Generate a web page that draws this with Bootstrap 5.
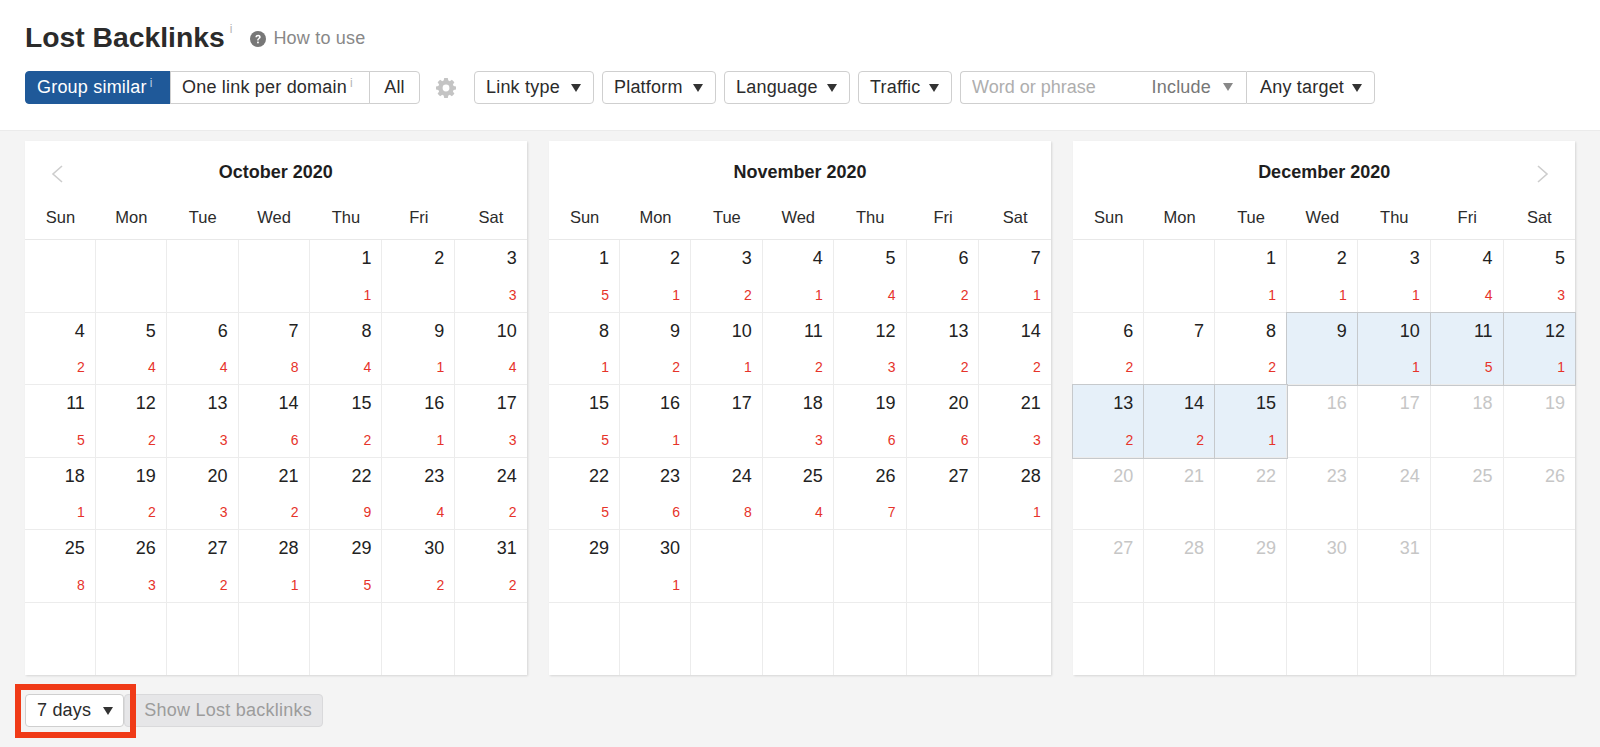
<!DOCTYPE html>
<html lang="en">
<head>
<meta charset="utf-8">
<title>Lost Backlinks</title>
<link href="https://cdn.jsdelivr.net/npm/bootstrap@5.3.0/dist/css/bootstrap.min.css" rel="stylesheet">
<style>
html,body{height:747px;overflow:hidden}
body{background:#f4f4f4;font-family:"Liberation Sans",Arial,sans-serif;color:#222;font-size:18px}
.head-area{background:#fff;height:131px;border-bottom:1px solid #ebebeb;padding:20px 25px 0}
.page-title{font-size:28.3px;font-weight:700;line-height:34px;margin:0;color:#2b2b2b}
.tip{font-size:12px;color:#b5b5b5;font-weight:400;line-height:1;align-self:flex-start;margin-left:5px;margin-top:3px}
.tip-w{color:#b9cde3}
.how{color:#888;font-size:18px;margin-left:18px;margin-top:3px;letter-spacing:.2px}
.how svg{margin-right:7px}
.tools{margin-top:17px;height:33px}
.ah{--bs-btn-font-size:18px;--bs-btn-padding-x:11px;--bs-btn-padding-y:0;--bs-btn-border-color:#cfcfcf;--bs-btn-color:#2b2b2b;--bs-btn-bg:#fff;--bs-btn-border-radius:4px;--bs-btn-line-height:31px;--bs-btn-hover-bg:#fff;--bs-btn-hover-color:#2b2b2b;--bs-btn-hover-border-color:#cfcfcf;height:33px;white-space:nowrap;display:inline-flex;align-items:center;justify-content:flex-start;letter-spacing:.2px}
.ah.on{--bs-btn-bg:#1f5999;--bs-btn-color:#fff;--bs-btn-border-color:#1f5999;--bs-btn-hover-bg:#1f5999;--bs-btn-hover-color:#fff;--bs-btn-hover-border-color:#1f5999}
.ah .tip{margin-left:3px;align-self:center;transform:translateY(-6px)}
.dropdown-toggle.ah{padding-right:12px;justify-content:space-between}
.dropdown-toggle.ah::after{border-top:8px solid #333;border-left:5px solid transparent;border-right:5px solid transparent;border-bottom:0;margin-left:0;vertical-align:middle}
.w-gs{width:146px}.w-ol{width:200px}.w-al{width:51px;justify-content:center}
.w-lt{width:120px}.w-pf{width:114px}.w-lg{width:126px}.w-tr{width:94px}
.gear{margin:0 18px 0 16px;flex:none}
.word-box{width:286px;height:33px;border:1px solid #cfcfcf;border-right:0;border-radius:4px 0 0 4px;background:#fff;padding:0 13px 0 11px;margin-left:8px}
.word-input{border:0;outline:0;padding:0;font-size:18px;width:150px;background:transparent;color:#222}
.word-input::placeholder{color:#aeaeae}
.incl{color:#777;font-size:18px;letter-spacing:.2px}
.incl::after{content:"";display:inline-block;border-top:8px solid #888;border-left:5px solid transparent;border-right:5px solid transparent;margin-left:12px;vertical-align:2px}
.dropdown-toggle.w-tg{width:129px;border-radius:0 4px 4px 0;padding-left:13px}
.cals{padding:10px 25px 0 25px;gap:22.5px}
.panel-cal{flex:1 1 0;min-width:0;background:#fff;box-shadow:1px 1px 2px rgba(0,0,0,.12);height:534px}
.cal-top{height:62px;font-size:18px;font-weight:700;color:#1e1e1e}
.cal-top svg{position:absolute;top:24px}
.prev{left:26px}.next{right:26px}
.gridz{display:grid;grid-template-columns:71fr 71fr 72fr 71fr 73fr 73fr 71.5fr}
.wk{height:37px;border-bottom:1px solid #e8e8e8;font-size:16.5px;color:#2b2b2b;padding-top:1px}
.wk>div{text-align:center;line-height:26px}
.days{height:435px;grid-template-rows:repeat(6,1fr)}
.dc{border-right:1px solid #ececec;border-bottom:1px solid #ececec;padding:8px 10px 10px 0;display:flex;flex-direction:column;justify-content:space-between;text-align:right;min-width:0}
.gridz .dc:nth-child(7n){border-right:0}
.days .dc:nth-last-child(-n+7){border-bottom:0}
.dn{font-size:18px;line-height:20px;color:#222;display:block}
.dr{font-size:14px;line-height:14px;color:#e6332a;display:block;margin-top:auto}
.off .dn{color:#c6c6c6}
.sel{background:#e6f0f9;box-shadow:0 0 0 1px #c6c9cc;position:relative}
.foot{padding:19px 0 0 25px}
.red-wrap{position:relative;z-index:2}
.red-wrap::after{content:"";position:absolute;left:-10px;right:-12px;top:-10px;bottom:-11px;border:6px solid #f03a17;pointer-events:none}
.dropdown-toggle.ah-seven{width:99px;padding-right:10px}
.ah-show{--bs-btn-disabled-bg:#e6e6e8;--bs-btn-disabled-border-color:#d9d9db;--bs-btn-disabled-color:#9c9c9c;--bs-btn-disabled-opacity:1;width:199px;justify-content:flex-end;padding-right:10px;letter-spacing:.25px}
</style>
</head>
<body>
<header class="head-area">
  <div class="d-flex align-items-center">
    <h1 class="page-title">Lost Backlinks</h1><span class="tip">i</span>
    <span class="how d-flex align-items-center"><svg width="16" height="16" viewBox="0 0 16 16"><circle cx="8" cy="8" r="8" fill="#777"/><path d="M5.4 6.2C5.5 4.6 6.6 3.8 8.1 3.8c1.5 0 2.6.9 2.6 2.2 0 1-.6 1.5-1.3 2-.6.4-.8.7-.8 1.3v.3H7.2v-.4c0-1 .4-1.5 1.1-2 .5-.4.8-.6.8-1.1 0-.6-.4-.9-1-.9-.7 0-1.1.4-1.2 1H5.4z" fill="#fff"/><rect x="7.1" y="10.6" width="1.7" height="1.7" fill="#fff"/></svg>How to use</span>
  </div>
  <div class="tools d-flex align-items-center">
    <div class="btn-group">
      <button type="button" class="btn ah on w-gs">Group similar<span class="tip tip-w">i</span></button>
      <button type="button" class="btn ah w-ol">One link per domain<span class="tip">i</span></button>
      <button type="button" class="btn ah w-al">All</button>
    </div>
    <svg class="gear" width="20" height="20" viewBox="0 0 20 20"><path fill="#c4c4c4" fill-rule="evenodd" d="M8.2 0h3.6l.5 2.6c.5.2 1 .4 1.4.7l2.2-1.5 2.5 2.5-1.5 2.2c.3.4.5.9.7 1.4l2.4.5v3.2l-2.4.5c-.2.5-.4 1-.7 1.4l1.5 2.2-2.5 2.5-2.2-1.5c-.4.3-.9.5-1.4.7l-.5 2.6H8.2l-.5-2.6c-.5-.2-1-.4-1.4-.7l-2.2 1.5-2.5-2.5 1.5-2.2c-.3-.4-.5-.9-.7-1.4L0 11.6V8.4l2.4-.5c.2-.5.4-1 .7-1.4L1.6 4.3l2.5-2.5 2.2 1.5c.4-.3.9-.5 1.4-.7zM10 6.6a3.4 3.4 0 1 0 0 6.8 3.4 3.4 0 0 0 0-6.8z"/></svg>
    <div class="d-flex gap-2">
      <button type="button" class="btn ah dropdown-toggle w-lt">Link type</button>
      <button type="button" class="btn ah dropdown-toggle w-pf">Platform</button>
      <button type="button" class="btn ah dropdown-toggle w-lg">Language</button>
      <button type="button" class="btn ah dropdown-toggle w-tr">Traffic</button>
    </div>
    <div class="word-box d-flex align-items-center justify-content-between">
      <input class="word-input" type="text" placeholder="Word or phrase">
      <span class="incl">Include</span>
    </div>
    <button type="button" class="btn ah dropdown-toggle w-tg">Any target</button>
  </div>
</header>

<main>
<div class="cals d-flex">
  <section class="panel-cal">
    <div class="cal-top position-relative d-flex align-items-center justify-content-center">
      <svg class="prev" width="12" height="18" viewBox="0 0 12 18"><path d="M11 1 2 9l9 8" fill="none" stroke="#cdcdcd" stroke-width="1.6"/></svg>
      October 2020
    </div>
    <div class="gridz wk"><div>Sun</div><div>Mon</div><div>Tue</div><div>Wed</div><div>Thu</div><div>Fri</div><div>Sat</div></div>
    <div class="gridz days">
      <div class="dc"></div><div class="dc"></div><div class="dc"></div><div class="dc"></div>
      <div class="dc"><span class="dn">1</span><span class="dr">1</span></div>
      <div class="dc"><span class="dn">2</span></div>
      <div class="dc"><span class="dn">3</span><span class="dr">3</span></div>
      <div class="dc"><span class="dn">4</span><span class="dr">2</span></div>
      <div class="dc"><span class="dn">5</span><span class="dr">4</span></div>
      <div class="dc"><span class="dn">6</span><span class="dr">4</span></div>
      <div class="dc"><span class="dn">7</span><span class="dr">8</span></div>
      <div class="dc"><span class="dn">8</span><span class="dr">4</span></div>
      <div class="dc"><span class="dn">9</span><span class="dr">1</span></div>
      <div class="dc"><span class="dn">10</span><span class="dr">4</span></div>
      <div class="dc"><span class="dn">11</span><span class="dr">5</span></div>
      <div class="dc"><span class="dn">12</span><span class="dr">2</span></div>
      <div class="dc"><span class="dn">13</span><span class="dr">3</span></div>
      <div class="dc"><span class="dn">14</span><span class="dr">6</span></div>
      <div class="dc"><span class="dn">15</span><span class="dr">2</span></div>
      <div class="dc"><span class="dn">16</span><span class="dr">1</span></div>
      <div class="dc"><span class="dn">17</span><span class="dr">3</span></div>
      <div class="dc"><span class="dn">18</span><span class="dr">1</span></div>
      <div class="dc"><span class="dn">19</span><span class="dr">2</span></div>
      <div class="dc"><span class="dn">20</span><span class="dr">3</span></div>
      <div class="dc"><span class="dn">21</span><span class="dr">2</span></div>
      <div class="dc"><span class="dn">22</span><span class="dr">9</span></div>
      <div class="dc"><span class="dn">23</span><span class="dr">4</span></div>
      <div class="dc"><span class="dn">24</span><span class="dr">2</span></div>
      <div class="dc"><span class="dn">25</span><span class="dr">8</span></div>
      <div class="dc"><span class="dn">26</span><span class="dr">3</span></div>
      <div class="dc"><span class="dn">27</span><span class="dr">2</span></div>
      <div class="dc"><span class="dn">28</span><span class="dr">1</span></div>
      <div class="dc"><span class="dn">29</span><span class="dr">5</span></div>
      <div class="dc"><span class="dn">30</span><span class="dr">2</span></div>
      <div class="dc"><span class="dn">31</span><span class="dr">2</span></div>
      <div class="dc"></div><div class="dc"></div><div class="dc"></div><div class="dc"></div><div class="dc"></div><div class="dc"></div><div class="dc"></div>
    </div>
  </section>

  <section class="panel-cal">
    <div class="cal-top position-relative d-flex align-items-center justify-content-center">November 2020</div>
    <div class="gridz wk"><div>Sun</div><div>Mon</div><div>Tue</div><div>Wed</div><div>Thu</div><div>Fri</div><div>Sat</div></div>
    <div class="gridz days">
      <div class="dc"><span class="dn">1</span><span class="dr">5</span></div>
      <div class="dc"><span class="dn">2</span><span class="dr">1</span></div>
      <div class="dc"><span class="dn">3</span><span class="dr">2</span></div>
      <div class="dc"><span class="dn">4</span><span class="dr">1</span></div>
      <div class="dc"><span class="dn">5</span><span class="dr">4</span></div>
      <div class="dc"><span class="dn">6</span><span class="dr">2</span></div>
      <div class="dc"><span class="dn">7</span><span class="dr">1</span></div>
      <div class="dc"><span class="dn">8</span><span class="dr">1</span></div>
      <div class="dc"><span class="dn">9</span><span class="dr">2</span></div>
      <div class="dc"><span class="dn">10</span><span class="dr">1</span></div>
      <div class="dc"><span class="dn">11</span><span class="dr">2</span></div>
      <div class="dc"><span class="dn">12</span><span class="dr">3</span></div>
      <div class="dc"><span class="dn">13</span><span class="dr">2</span></div>
      <div class="dc"><span class="dn">14</span><span class="dr">2</span></div>
      <div class="dc"><span class="dn">15</span><span class="dr">5</span></div>
      <div class="dc"><span class="dn">16</span><span class="dr">1</span></div>
      <div class="dc"><span class="dn">17</span></div>
      <div class="dc"><span class="dn">18</span><span class="dr">3</span></div>
      <div class="dc"><span class="dn">19</span><span class="dr">6</span></div>
      <div class="dc"><span class="dn">20</span><span class="dr">6</span></div>
      <div class="dc"><span class="dn">21</span><span class="dr">3</span></div>
      <div class="dc"><span class="dn">22</span><span class="dr">5</span></div>
      <div class="dc"><span class="dn">23</span><span class="dr">6</span></div>
      <div class="dc"><span class="dn">24</span><span class="dr">8</span></div>
      <div class="dc"><span class="dn">25</span><span class="dr">4</span></div>
      <div class="dc"><span class="dn">26</span><span class="dr">7</span></div>
      <div class="dc"><span class="dn">27</span></div>
      <div class="dc"><span class="dn">28</span><span class="dr">1</span></div>
      <div class="dc"><span class="dn">29</span></div>
      <div class="dc"><span class="dn">30</span><span class="dr">1</span></div>
      <div class="dc"></div><div class="dc"></div><div class="dc"></div><div class="dc"></div><div class="dc"></div>
      <div class="dc"></div><div class="dc"></div><div class="dc"></div><div class="dc"></div><div class="dc"></div><div class="dc"></div><div class="dc"></div>
    </div>
  </section>

  <section class="panel-cal">
    <div class="cal-top position-relative d-flex align-items-center justify-content-center">
      December 2020
      <svg class="next" width="12" height="18" viewBox="0 0 12 18"><path d="m1 1 9 8-9 8" fill="none" stroke="#cdcdcd" stroke-width="1.6"/></svg>
    </div>
    <div class="gridz wk"><div>Sun</div><div>Mon</div><div>Tue</div><div>Wed</div><div>Thu</div><div>Fri</div><div>Sat</div></div>
    <div class="gridz days">
      <div class="dc"></div><div class="dc"></div>
      <div class="dc"><span class="dn">1</span><span class="dr">1</span></div>
      <div class="dc"><span class="dn">2</span><span class="dr">1</span></div>
      <div class="dc"><span class="dn">3</span><span class="dr">1</span></div>
      <div class="dc"><span class="dn">4</span><span class="dr">4</span></div>
      <div class="dc"><span class="dn">5</span><span class="dr">3</span></div>
      <div class="dc"><span class="dn">6</span><span class="dr">2</span></div>
      <div class="dc"><span class="dn">7</span></div>
      <div class="dc"><span class="dn">8</span><span class="dr">2</span></div>
      <div class="dc sel"><span class="dn">9</span></div>
      <div class="dc sel"><span class="dn">10</span><span class="dr">1</span></div>
      <div class="dc sel"><span class="dn">11</span><span class="dr">5</span></div>
      <div class="dc sel"><span class="dn">12</span><span class="dr">1</span></div>
      <div class="dc sel"><span class="dn">13</span><span class="dr">2</span></div>
      <div class="dc sel"><span class="dn">14</span><span class="dr">2</span></div>
      <div class="dc sel"><span class="dn">15</span><span class="dr">1</span></div>
      <div class="dc off"><span class="dn">16</span></div>
      <div class="dc off"><span class="dn">17</span></div>
      <div class="dc off"><span class="dn">18</span></div>
      <div class="dc off"><span class="dn">19</span></div>
      <div class="dc off"><span class="dn">20</span></div>
      <div class="dc off"><span class="dn">21</span></div>
      <div class="dc off"><span class="dn">22</span></div>
      <div class="dc off"><span class="dn">23</span></div>
      <div class="dc off"><span class="dn">24</span></div>
      <div class="dc off"><span class="dn">25</span></div>
      <div class="dc off"><span class="dn">26</span></div>
      <div class="dc off"><span class="dn">27</span></div>
      <div class="dc off"><span class="dn">28</span></div>
      <div class="dc off"><span class="dn">29</span></div>
      <div class="dc off"><span class="dn">30</span></div>
      <div class="dc off"><span class="dn">31</span></div>
      <div class="dc"></div><div class="dc"></div>
      <div class="dc"></div><div class="dc"></div><div class="dc"></div><div class="dc"></div><div class="dc"></div><div class="dc"></div><div class="dc"></div>
    </div>
  </section>
</div>
<div class="foot d-flex">
  <span class="red-wrap d-inline-flex"><button type="button" class="btn ah dropdown-toggle ah-seven">7 days</button></span>
  <button type="button" class="btn ah ah-show" disabled>Show Lost backlinks</button>
</div>
</main>
<script src="https://cdn.jsdelivr.net/npm/bootstrap@5.3.0/dist/js/bootstrap.bundle.min.js"></script>
</body>
</html>
